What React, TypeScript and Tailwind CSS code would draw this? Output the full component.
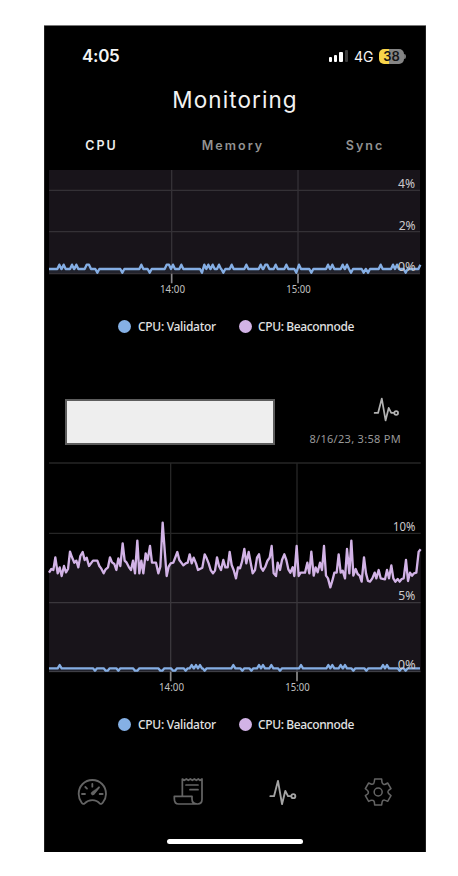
type Pt = [number, number];

// Chart coordinates are in thirds of a pixel, measured from the left screen edge.
const beacon: Pt[] = [
  [15,188],[22,177],[28,180],[34,142],[41,190],[47,172],[53,198],[60,168],[66,187],[72,177],[78,125],[84,142],[91,158],[97,152],[103,172],[109,138],[116,126],[122,150],[128,143],[135,168],[147,152],[160,152],[166,168],[172,176],[179,190],[185,178],[192,172],[198,142],[204,157],[211,162],[217,180],[223,145],[229,168],[236,100],[242,152],[248,158],[255,172],[261,180],[267,152],[273,190],[280,92],[286,190],[292,152],[298,190],[305,130],[311,150],[318,108],[324,158],[336,158],[343,190],[349,170],[356,38],[362,120],[368,198],[374,170],[380,160],
  [388,158],[400,126],[406,150],[418,166],[425,160],[431,158],[437,133],[443,160],[449,143],[456,160],[462,180],[475,173],[482,133],[488,145],[494,160],[500,180],[507,190],[513,182],[519,142],[525,168],[531,180],[538,150],[544,172],[551,172],[557,126],[563,165],[569,180],[576,205],[582,172],[588,175],[594,155],[601,117],[607,160],[614,126],[620,158],[626,190],[633,180],[639,143],[645,133],[651,172],[657,182],[664,170],[670,153],[677,143],[683,108],[689,190],[696,198],[701,158],[708,180],[714,150],[721,133],[727,150],[733,178],[739,188],[746,172],[751,198],
  [758,108],[764,198],[770,188],[783,188],[790,158],[796,190],[802,125],[809,197],[815,172],[821,187],[828,158],[834,180],[840,108],[846,197],[852,205],[859,232],[865,212],[871,188],[878,188],[884,133],[890,188],[896,182],[903,205],[909,117],[916,190],[922,92],[928,197],[935,177],[941,192],[947,197],[953,215],[960,142],[966,190],[972,213],[978,215],[985,205],[992,188],[997,205],[1004,180],[1010,205],[1023,208],[1029,180],[1035,205],[1042,166],[1048,205],[1054,215],[1061,207],[1067,215],[1073,207],[1079,205],[1086,150],[1092,213],[1098,188],[1104,197],[1110,190],[1117,188],[1124,125],[1130,118],
];

// Deviations from the baseline: [x, 1] is a bump, [x, -1] a dip.
const validatorTop: Pt[] = [
  [46,1],[59,1],[84,1],[97,1],[128,1],[135,1],[160,-1],[235,-1],[292,1],[317,-1],[368,1],[375,1],[387,1],[412,1],[474,-1],[481,1],[493,1],[506,1],[525,1],[538,-1],[563,1],
  [607,1],[650,1],[664,1],[670,1],[695,1],[727,1],[757,-1],[765,1],[802,-1],[852,1],[865,1],[896,1],[909,1],[921,-1],[959,-1],[972,-1],[1010,1],[1047,1],[1059,1],[1085,-1],[1129,1],
];
const validatorBottom: Pt[] = [
  [47,1],[153,-1],[185,-1],[191,-1],[223,-1],[273,-1],[280,-1],[349,-1],[355,-1],[387,-1],[393,-1],[425,-1],[443,1],[456,1],[468,1],[482,-1],
  [568,1],[595,-1],[622,-1],[645,1],[657,1],[682,1],[708,-1],[771,1],[853,1],[865,1],[890,1],[903,1],[928,-1],[967,-1],[1017,1],[1029,1],[1067,-1],[1085,-1],
];

const toPoints = (pts: Pt[]) => pts.map((p) => p.join(",")).join(" ");

function baseline(events: Pt[], base: number, up: number, down: number): Pt[] {
  const out: Pt[] = [[15, base]];
  events.forEach(([x, dir], i) => {
    const prev = i ? events[i - 1][0] : -99;
    const next = i < events.length - 1 ? events[i + 1][0] : 9999;
    if (x - prev > 9) out.push([x - 6, base]);
    out.push([x, dir > 0 ? up : down]);
    if (next - x > 9 && x + 6 < 1128) out.push([x + 6, base]);
  });
  if (out[out.length - 1][0] < 1125) out.push([1128, base]);
  return out;
}

const axis = "font-['Noto_Sans'] font-normal";

function TopChart() {
  const line = baseline(validatorTop, 327, 314, 338);
  return (
    <svg className="block h-[128px] w-[382px] shrink-0" viewBox="0 30 1146 384">
      <rect x="15" y="30" width="1113" height="311" fill="#18141a" />
      <polygon points={`15,341 ${toPoints(line)} 1128,341`} fill="#22232d" />
      <g stroke="#343136" strokeWidth="4" fill="none">
        <path d="M15 91H1128M15 215H1128M15 341H1128M383 30V341M762 30V341" />
      </g>
      <path d="M383 341V370M762 341V370" stroke="#8a888c" strokeWidth="5" />
      <polyline points={toPoints(line)} fill="none" stroke="#85aee4" strokeWidth="7" strokeLinejoin="round" />
      <g className={axis} fill="#cdcbce" fontSize="37">
        <text x="1062" y="83" textLength="51" lengthAdjust="spacingAndGlyphs">4%</text>
        <text x="1064" y="209" textLength="51" lengthAdjust="spacingAndGlyphs">2%</text>
        <text x="1061" y="334" textLength="54" lengthAdjust="spacingAndGlyphs">0%</text>
      </g>
      <g className={axis} fill="#c2c2c2" fontSize="32">
        <text x="348" y="398" textLength="75" lengthAdjust="spacingAndGlyphs">14:00</text>
        <text x="727" y="398" textLength="73" lengthAdjust="spacingAndGlyphs">15:00</text>
      </g>
    </svg>
  );
}

function BottomChart() {
  const line = baseline(validatorBottom, 475, 465, 482);
  return (
    <svg className="block h-[234px] w-[382px] shrink-0" viewBox="0 -144 1146 702">
      <polygon points={`15,485 ${toPoints(beacon)} 1130,485`} fill="#18141a" />
      <polygon points={`15,485 ${toPoints(line)} 1128,485`} fill="#22232d" />
      <path d="M15 -141H1130M15 70H1130M15 278H1130M15 485H1130M380 -141V485M759 -141V485" stroke="#ffffff" strokeOpacity=".15" strokeWidth="4" />
      <path d="M380 485V514M759 485V514" stroke="#8c8c8c" strokeWidth="5" />
      <polyline points={toPoints(beacon)} fill="none" stroke="#d2b3e6" strokeWidth="7" strokeLinejoin="round" />
      <polyline points={toPoints(line)} fill="none" stroke="#85aee4" strokeWidth="7" strokeLinejoin="round" />
      <g className={axis} fill="#cdcbce" fontSize="37">
        <text x="1047" y="62" textLength="67" lengthAdjust="spacingAndGlyphs">10%</text>
        <text x="1063" y="270" textLength="51" lengthAdjust="spacingAndGlyphs">5%</text>
        <text x="1061" y="478" textLength="54" lengthAdjust="spacingAndGlyphs">0%</text>
      </g>
      <g className={axis} fill="#c2c2c2" fontSize="32">
        <text x="345" y="542" textLength="75" lengthAdjust="spacingAndGlyphs">14:00</text>
        <text x="724" y="542" textLength="73" lengthAdjust="spacingAndGlyphs">15:00</text>
      </g>
    </svg>
  );
}

function Legend() {
  return (
    <div className="flex h-[58px] shrink-0 items-center pl-[74px] font-['Noto_Sans'] text-[12px] font-medium text-[#e2e2e2]">
      <span className="size-[13px] -translate-y-px rounded-full bg-[#85b0e5]" />
      <span className="ml-[7px] w-[101px] whitespace-nowrap tracking-[-0.3px]">CPU: Validator</span>
      <span className="size-[13px] -translate-y-px rounded-full bg-[#d2b3e6]" />
      <span className="ml-[6px] whitespace-nowrap tracking-[-0.38px]">CPU: Beaconnode</span>
    </div>
  );
}

function Pulse({ className }: { className: string }) {
  return (
    <svg className={className} viewBox="103 56 84 80" fill="none" stroke="currentColor" strokeWidth="5.6" strokeLinecap="round" strokeLinejoin="round">
      <path d="M107 107H118L130 61L142 131L152 91L160 107H169" />
      <circle cx="176" cy="107" r="6" />
    </svg>
  );
}

function Gauge() {
  return (
    <svg className="h-[28px] w-[30px]" viewBox="98 54 90 84" fill="none" stroke="currentColor" strokeWidth="5.4" strokeLinecap="round" strokeLinejoin="round">
      <path d="M121 130C133 117 155 117 166 130C169 133 173 132 176 127C182 119 185 111 185 102C185 78 167 60 144 60S103 78 103 102C103 111 106 120 112 128C115 132 118 133 121 130Z" />
      <path d="M144 72V80M123 81L128 86M113 102H122M166 102H175" />
      <path d="M164 82L148 102" />
      <path d="M164 81L149 103A5 5 0 1 1 142 96Z" fill="currentColor" strokeWidth="1" />
    </svg>
  );
}

function Receipt() {
  return (
    <svg className="h-[30px] w-[30px]" viewBox="386 52 90 90" fill="none" stroke="currentColor" strokeWidth="5.2" strokeLinecap="round" strokeLinejoin="round">
      <path d="M414 109V58L420 62L426 58L432 62L438 58L444 62L450 58L456 62L462 58L467 62L473 58V119Q473 133 460 133H403Q390 133 390 117V110H443V118Q443 133 459 133" />
      <path d="M425 76H461M437 90H461" />
    </svg>
  );
}

function Gear() {
  return (
    <svg className="h-[30px] w-[30px]" viewBox="386 51 90 90" fill="none" stroke="currentColor" strokeWidth="4.6" strokeLinejoin="round">
      <path d="M421 57H442L443 67Q444 71 448 73Q451 75 460 69L470 86L464 90Q460 93 461 97Q461 100 470 107L460 124L453 121Q449 119 446 121Q443 123 442 135H421L420 126Q419 122 415 121Q411 119 403 124L393 107L400 102Q403 99 402 95Q401 92 393 86L403 69L410 72Q414 74 418 71Q420 69 421 57Z" />
      <circle cx="431.5" cy="96" r="12" />
    </svg>
  );
}

function StatusBar() {
  return (
    <header className="flex h-[60px] shrink-0 items-center justify-between pl-[38px] pr-[20px] font-['Inter'] text-[#f4f4f4]">
      <span className="pt-[2px] text-[17px] font-semibold tracking-[-0.3px]">4:05</span>
      <div className="flex items-center">
        <div className="flex items-end gap-[2px]">
          <span className="h-[5px] w-[3px] rounded-[1px] bg-white" />
          <span className="h-[7px] w-[3px] rounded-[1px] bg-white" />
          <span className="h-[10px] w-[4px] rounded-[1px] bg-white" />
          <span className="h-[12px] w-[3px] rounded-[1px] bg-[#3b3b3b]" />
        </div>
        <span className="ml-[6px] w-[25px] text-[14px] font-normal tracking-[-0.1px]">4G</span>
        <span className="flex h-[15px] w-[25px] items-center justify-center rounded-[5px] bg-linear-to-r from-[#f8d449] from-[38%] to-[#858585] to-[38%] pt-px text-[13px] font-semibold text-[#151515]">38</span>
        <span className="h-[5px] w-[2px] rounded-r-full bg-[#777]" />
      </div>
    </header>
  );
}

export default function App() {
  return (
    <main className="h-[876px] w-[458px] overflow-hidden bg-white pl-[44px] pt-[26px]">
      <div className="flex h-[826px] w-[382px] flex-col overflow-hidden bg-black shadow-[0_-1px_0_#777,inset_1px_0_0_#202020,inset_-1px_0_0_#202020]">
        <StatusBar />
        <h1 className="h-[36px] shrink-0 text-center font-['Inter'] text-[22.5px] font-normal leading-[27px] tracking-[1.1px] text-[#f2f2f2]">Monitoring</h1>
        <nav className="grid h-[48px] shrink-0 grid-cols-[115px_148px_116px] items-center text-center font-['Inter'] text-[12.5px] font-semibold tracking-[2px] text-[#929292]">
          <span className="text-[#eeeeee]">CPU</span>
          <span>Memory</span>
          <span>Sync</span>
        </nav>
        <TopChart />
        <Legend />
        <section className="flex h-[106px] shrink-0 justify-between pl-[21px] pr-[26px]">
          <div className="mt-[43px] h-[46px] w-[210px] border-2 border-[#5d5d5d] bg-[#eeeeee]" />
          <div className="flex flex-col items-end pt-[41px]">
            <Pulse className="h-[25px] w-[27px] text-[#b2b2b2]" />
            <span className="-mr-px mt-[9px] whitespace-nowrap font-['Noto_Sans'] text-[11px] leading-[16px] tracking-[0.3px] text-[#999999]">8/16/23, 3:58 PM</span>
          </div>
        </section>
        <BottomChart />
        <Legend />
        <footer className="flex h-[98px] shrink-0 flex-col items-center">
          <div className="flex h-[76px] w-full items-center justify-between pl-[33px] pr-[33px] text-[#646464]">
            <Gauge />
            <Receipt />
            <Pulse className="h-[27px] w-[28px] text-[#a4a4a4]" />
            <Gear />
          </div>
          <span className="mt-[9px] h-[5px] w-[136px] rounded-full bg-white" />
        </footer>
      </div>
    </main>
  );
}
